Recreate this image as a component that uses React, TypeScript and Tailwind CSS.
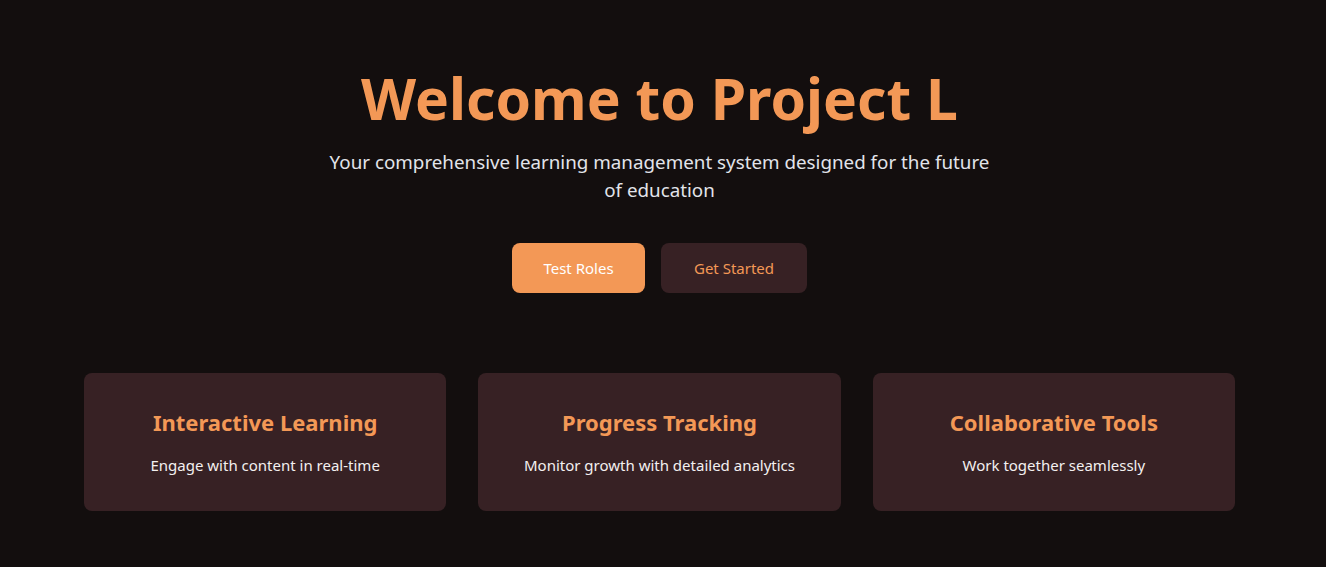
import React from "react";

const features = [
  { title: "Interactive Learning", desc: "Engage with content in real-time" },
  { title: "Progress Tracking", desc: "Monitor growth with detailed analytics" },
  { title: "Collaborative Tools", desc: "Work together seamlessly" },
];

const App = () => {
  return (
    <div
      className="min-h-[567px] w-full bg-[#130e0e] flex flex-col items-center pr-[7px]"
      style={{ fontFamily: '"Noto Sans", "Open Sans", sans-serif' }}
    >
      {/* Hero */}
      <div className="flex flex-col items-center pt-[60px]">
        <h1 className="text-[57px] leading-[76px] font-bold text-[#f39856]">
          Welcome to Project L
        </h1>
        <p className="mt-[12px] max-w-[672px] text-center text-[18.8px] leading-[28px] text-[#e2e4ea]">
          Your comprehensive learning management system designed for the future
          of education
        </p>
        <div className="mt-[39px] flex gap-4">
          <button className="h-[50px] w-[133px] rounded-lg bg-[#f39856] text-[15px] text-white">
            Test Roles
          </button>
          <button className="h-[50px] w-[146px] rounded-lg bg-[#372124] text-[15px] text-[#f39856]">
            Get Started
          </button>
        </div>
      </div>

      {/* Features */}
      <div className="mt-[80px] grid w-[1151px] grid-cols-3 gap-8">
        {features.map((f) => (
          <div
            key={f.title}
            className="flex h-[138px] flex-col items-center justify-center rounded-lg bg-[#372124]"
          >
            <h3 className="text-[22px] leading-[30px] font-bold text-[#f39856]">
              {f.title}
            </h3>
            <p className="mt-[17px] text-[15px] text-[#f3f0f0]">{f.desc}</p>
          </div>
        ))}
      </div>
    </div>
  );
};

export default App;
